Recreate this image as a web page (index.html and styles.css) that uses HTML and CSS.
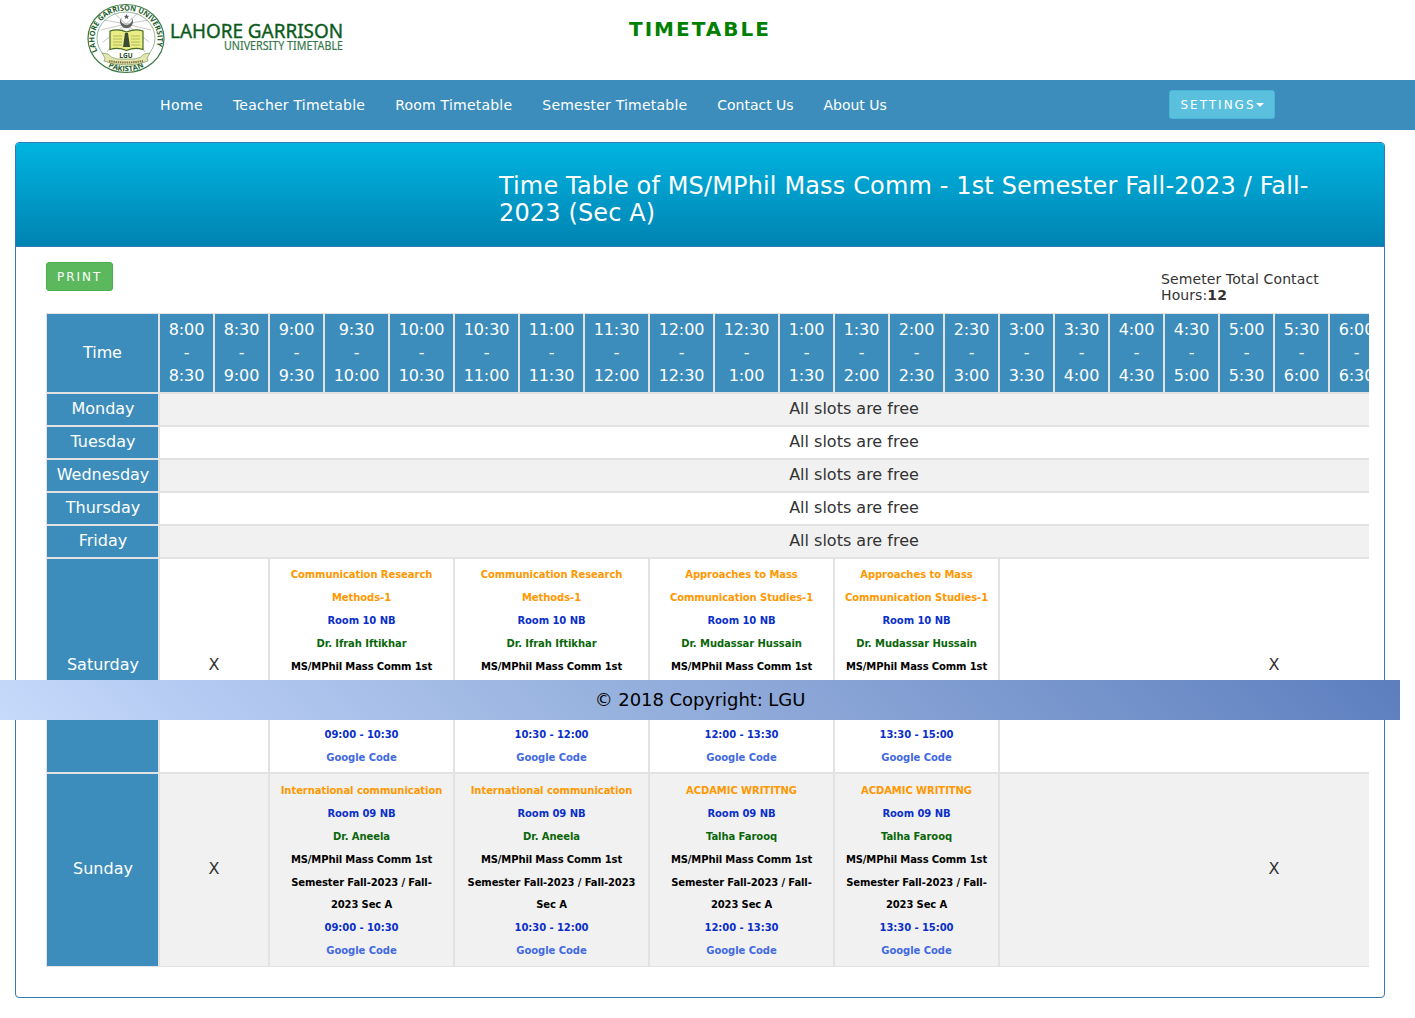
FILE: index.html
```html
<!DOCTYPE html>
<html lang="en">
<head>
<meta charset="utf-8">
<title>LGU Timetable</title>
<link rel="stylesheet" href="styles.css">
</head>
<body>
<header class="masthead">
  <svg class="logo" width="264" height="76" viewBox="0 0 264 76" role="img" aria-label="Lahore Garrison University Timetable">
    <defs>
      <path id="ring-top" d="M11 52 A31.5 28.5 0 1 1 67 52"/>
      <path id="ring-bottom" d="M17 64 A35 33 0 0 0 61 64"/>
    </defs>
    <ellipse cx="39" cy="38.500" rx="38" ry="34" fill="#fff" stroke="#3c7a45" stroke-width="1.200"/>
    <g stroke="#bfc2bf" stroke-width=".9">
      <path d="M39 24 14 30M39 24 17 20M39 24 27 13M39 24 51 13M39 24 61 20M39 24 64 30M39 24 16 42M39 24 62 42M39 24 20 52M39 24 58 52"/>
    </g>
    <ellipse cx="39" cy="38" rx="29" ry="26" fill="none" stroke="#7da481" stroke-width=".8"/>
    <g class="seal-text">
      <text><textPath href="#ring-top" startOffset="1" textLength="114" lengthAdjust="spacingAndGlyphs">LAHORE GARRISON UNIVERSITY</textPath></text>
      <text><textPath href="#ring-bottom" startOffset="5" textLength="37" lengthAdjust="spacingAndGlyphs">PAKISTAN</textPath></text>
    </g>
    <path d="M35 17a6.500 6.500 0 1 0 9 0 5.300 5.300 0 1 1-9 0z" fill="#5c605e"/>
    <path d="m39.500 14 .8 1.700 1.900.2-1.400 1.200.4 1.900-1.700-1-1.700 1 .4-1.900-1.400-1.200 1.900-.2z" fill="#5c605e"/>
    <path d="M23 31q8-2.500 16.500 1 8.500-3.500 16.500-1v18.500q-8-2.500-16.500 1-8.500-3.500-16.500-1z" fill="#eaec86" stroke="#476a25" stroke-width="1.200"/>
    <path d="M26 36h9M26 39h9M26 42h9M26 45h9M44 36h9M44 39h9M44 42h9M44 45h9" stroke="#a5ae51" stroke-width=".8"/>
    <path d="M38 33h3l2 14h-7z" fill="#3d4c38"/>
    <path d="M15 53l6 1q3 4 9 5h18q6-1 9-5l6-1-3 5 1 3q-9 4-22 4t-22-4l1-3z" fill="#e2e6b0" stroke="#7f9654" stroke-width=".7"/>
    <path d="M29 52h20v6H29z" fill="#fff"/>
    <text class="seal-lgu" x="39" y="57.500">LGU</text>
    <path d="M22 61q17 3 34 0" fill="none" stroke="#8a744a" stroke-width="2" stroke-dasharray="1.500 .7"/>
    <text class="brand-main" x="83" y="38" textLength="173" lengthAdjust="spacingAndGlyphs">LAHORE GARRISON</text>
    <text class="brand-sub" x="137" y="50" textLength="119" lengthAdjust="spacingAndGlyphs">UNIVERSITY TIMETABLE</text>
  </svg>
  <h1 class="site-title">TIMETABLE</h1>
</header>

<nav class="navbar">
  <ul class="nav-links">
    <li>Home</li><li>Teacher Timetable</li><li>Room Timetable</li><li>Semester Timetable</li><li>Contact Us</li><li>About Us</li>
  </ul>
  <button class="btn btn-settings">SETTINGS<span class="caret"></span></button>
</nav>

<main class="panel">
  <div class="panel-heading">
    <h3>Time Table of MS/MPhil Mass Comm - 1st Semester Fall-2023 / Fall-2023 (Sec A)</h3>
  </div>
  <div class="panel-body">
    <div class="toolbar">
      <button class="btn btn-print">PRINT</button>
      <h5 class="hours">Semeter Total Contact Hours:<b>12</b></h5>
    </div>
    <div class="table-scroll">
      <table class="timetable">
        <colgroup>
          <col class="col-day"><col span="3" class="col-slot"><col span="7" class="col-wide"><col span="14" class="col-slot">
        </colgroup>
        <tr class="slots">
          <th>Time</th>
          <th>8:00<br>-<br>8:30</th><th>8:30<br>-<br>9:00</th><th>9:00<br>-<br>9:30</th><th>9:30<br>-<br>10:00</th>
          <th>10:00<br>-<br>10:30</th><th>10:30<br>-<br>11:00</th><th>11:00<br>-<br>11:30</th><th>11:30<br>-<br>12:00</th>
          <th>12:00<br>-<br>12:30</th><th>12:30<br>-<br>1:00</th><th>1:00<br>-<br>1:30</th><th>1:30<br>-<br>2:00</th>
          <th>2:00<br>-<br>2:30</th><th>2:30<br>-<br>3:00</th><th>3:00<br>-<br>3:30</th><th>3:30<br>-<br>4:00</th>
          <th>4:00<br>-<br>4:30</th><th>4:30<br>-<br>5:00</th><th>5:00<br>-<br>5:30</th><th>5:30<br>-<br>6:00</th>
          <th>6:00<br>-<br>6:30</th><th>6:30<br>-<br>7:00</th><th>7:00<br>-<br>7:30</th><th>7:30<br>-<br>8:00</th>
        </tr>
        <tr class="free odd"><th>Monday</th><td colspan="24">All slots are free</td></tr>
        <tr class="free"><th>Tuesday</th><td colspan="24">All slots are free</td></tr>
        <tr class="free odd"><th>Wednesday</th><td colspan="24">All slots are free</td></tr>
        <tr class="free"><th>Thursday</th><td colspan="24">All slots are free</td></tr>
        <tr class="free odd"><th>Friday</th><td colspan="24">All slots are free</td></tr>
        <tr class="saturday">
          <th>Saturday</th>
          <td class="empty" colspan="2">X</td>
          <td colspan="3"><div class="lesson"><span class="course">Communication Research Methods-1</span><br><span class="room">Room 10 NB</span><br><span class="teacher">Dr. Ifrah Iftikhar</span><br><span class="group">MS/MPhil Mass Comm 1st Semester Fall-2023 / Fall-2023 Sec A</span><br><span class="room">09:00 - 10:30</span><br><span class="code">Google Code</span></div></td>
          <td colspan="3"><div class="lesson"><span class="course">Communication Research<br>Methods-1</span><br><span class="room">Room 10 NB</span><br><span class="teacher">Dr. Ifrah Iftikhar</span><br><span class="group">MS/MPhil Mass Comm 1st Semester Fall-2023 / Fall-2023 Sec A</span><br><span class="room">10:30 - 12:00</span><br><span class="code">Google Code</span></div></td>
          <td colspan="3"><div class="lesson"><span class="course">Approaches to Mass Communication Studies-1</span><br><span class="room">Room 10 NB</span><br><span class="teacher">Dr. Mudassar Hussain</span><br><span class="group">MS/MPhil Mass Comm 1st Semester Fall-2023 / Fall-2023 Sec A</span><br><span class="room">12:00 - 13:30</span><br><span class="code">Google Code</span></div></td>
          <td colspan="3"><div class="lesson"><span class="course">Approaches to Mass Communication Studies-1</span><br><span class="room">Room 10 NB</span><br><span class="teacher">Dr. Mudassar Hussain</span><br><span class="group">MS/MPhil Mass Comm 1st Semester Fall-2023 / Fall-2023 Sec A</span><br><span class="room">13:30 - 15:00</span><br><span class="code">Google Code</span></div></td>
          <td class="empty" colspan="10">X</td>
        </tr>
        <tr class="sunday odd">
          <th>Sunday</th>
          <td class="empty" colspan="2">X</td>
          <td colspan="3"><div class="lesson"><span class="course">International communication</span><br><span class="room">Room 09 NB</span><br><span class="teacher">Dr. Aneela</span><br><span class="group">MS/MPhil Mass Comm 1st Semester Fall-2023 / Fall-2023 Sec A</span><br><span class="room">09:00 - 10:30</span><br><span class="code">Google Code</span></div></td>
          <td colspan="3"><div class="lesson"><span class="course">International communication</span><br><span class="room">Room 09 NB</span><br><span class="teacher">Dr. Aneela</span><br><span class="group">MS/MPhil Mass Comm 1st Semester Fall-2023 / Fall-2023 Sec A</span><br><span class="room">10:30 - 12:00</span><br><span class="code">Google Code</span></div></td>
          <td colspan="3"><div class="lesson"><span class="course">ACDAMIC WRITITNG</span><br><span class="room">Room 09 NB</span><br><span class="teacher">Talha Farooq</span><br><span class="group">MS/MPhil Mass Comm 1st Semester Fall-2023 / Fall-2023 Sec A</span><br><span class="room">12:00 - 13:30</span><br><span class="code">Google Code</span></div></td>
          <td colspan="3"><div class="lesson"><span class="course">ACDAMIC WRITITNG</span><br><span class="room">Room 09 NB</span><br><span class="teacher">Talha Farooq</span><br><span class="group">MS/MPhil Mass Comm 1st Semester Fall-2023 / Fall-2023 Sec A</span><br><span class="room">13:30 - 15:00</span><br><span class="code">Google Code</span></div></td>
          <td class="empty" colspan="10">X</td>
        </tr>
      </table>
    </div>
  </div>
</main>

<footer class="copyright">© 2018 Copyright: LGU</footer>
</body>
</html>
```

FILE: styles.css
```css
* { box-sizing: border-box; }

html { overflow: hidden; }

body {
  margin: 0;
  font-family: "DejaVu Sans", Verdana, sans-serif;
  font-size: 14px;
  line-height: 1.42857;
  color: #333;
  background: #fff;
}

.masthead {
  display: flex;
  align-items: flex-start;
  height: 80px;
  padding-left: 87px;
}

.logo { flex: none; }

.seal-text {
  font: bold 7.5px "Open Sans", sans-serif;
  fill: #1d5c28;
}

.seal-lgu {
  font: bold 6.5px "Open Sans", sans-serif;
  fill: #1d4a22;
  text-anchor: middle;
}

.brand-main {
  font: 19.5px "Noto Sans", sans-serif;
  fill: #0b5a1b;
  stroke: #0b5a1b;
  stroke-width: .4px;
}

.brand-sub {
  font: 12px "Noto Sans", sans-serif;
  fill: #37784a;
  stroke: #37784a;
  stroke-width: .2px;
}

.site-title {
  margin: 18px 0 0 278px;
  font-size: 20px;
  line-height: 22px;
  letter-spacing: 2px;
  color: green;
}

.navbar {
  display: flex;
  justify-content: space-between;
  align-items: flex-start;
  height: 50px;
  padding: 10px 140px 0 160px;
  background: #3c8dbc;
}

.nav-links {
  display: flex;
  gap: 30px;
  margin: 0;
  padding: 6px 0 0;
  list-style: none;
  letter-spacing: .22px;
  color: #fff;
}

.nav-links li:first-child { letter-spacing: .4px; }
.nav-links li:nth-child(n + 5) { letter-spacing: -.03px; }

.btn {
  height: 29px;
  padding: 0 10px;
  border: 1px solid;
  border-radius: 3px;
  font: 12px/18px "DejaVu Sans", sans-serif;
  letter-spacing: 2px;
  color: #fff;
}

.btn-settings {
  width: 106px;
  background: #5bc0de;
  border-color: #46b8da;
}

.btn-print {
  width: 67px;
  background: #5cb85c;
  border-color: #4cae4c;
}

.caret {
  display: inline-block;
  vertical-align: middle;
  border-top: 4px solid;
  border-left: 4px solid transparent;
  border-right: 4px solid transparent;
}

.panel {
  width: 1370px;
  height: 856px;
  margin: 12px 0 20px 15px;
  border: 1px solid #337ab7;
  border-radius: 4px;
  overflow: hidden;
}

.panel-heading {
  height: 104px;
  padding: 30px 45px 0 483px;
  border-bottom: 1px solid #337ab7;
  background: linear-gradient(#00b4e0, #0083b2);
  color: #fff;
}

.panel-heading h3 {
  margin: 0;
  font-size: 24px;
  font-weight: 400;
  line-height: 27px;
  letter-spacing: .14px;
}

.panel-body { padding: 15px 15px 0 30px; }

.toolbar {
  display: flex;
  justify-content: space-between;
  align-items: flex-start;
  height: 51px;
}

.hours {
  width: 208px;
  margin: 9px 0 0;
  padding-right: 20px;
  font-size: 14px;
  font-weight: 400;
  line-height: 16px;
  letter-spacing: .1px;
}

.table-scroll { overflow: hidden; }

.timetable {
  width: 1503px;
  table-layout: fixed;
  border-collapse: separate;
  border-spacing: 0;
  font-size: 16px;
  text-align: center;
}

.col-day { width: 113px; }
.col-slot { width: 55px; }
.col-wide { width: 65px; }

.timetable th,
.timetable td {
  padding: 0 8px;
  border: 1px solid #e2e2e2;
  vertical-align: middle;
}

.timetable th {
  padding-left: 9px;
  background: #3c8dbc;
  color: #fff;
  font-weight: 400;
}

.timetable .slots th {
  padding: 0 8px 2px;
  letter-spacing: -.1px;
}

.odd td { background: #f1f1f1; }

.slots { height: 80px; line-height: 23px; }
.free { height: 33px; }
.saturday { height: 215px; }
.sunday { height: 194px; }

.timetable .saturday th,
.timetable .saturday .empty { padding-bottom: 1px; }

.timetable .sunday th,
.timetable .sunday .empty { padding-bottom: 2px; }

.lesson {
  padding-top: 3px;
  font-size: 10px;
  font-weight: 700;
  line-height: 22.857px;
  letter-spacing: -.06px;
}

.course { color: #ff9800; }
.room { color: #0a2fc9; }
.teacher { color: #0a660a; }
.group { color: #000; letter-spacing: -.12px; }
.code { color: #4169e1; }

.copyright {
  position: fixed;
  left: 0;
  top: 680px;
  width: 1400px;
  height: 40px;
  font-size: 18px;
  line-height: 40px;
  letter-spacing: -.08px;
  text-align: center;
  color: #000;
  background: linear-gradient(45deg, #c6dafb, #b6cbf2 14%, #9ab4e0 41%, #8aa5d6 58%, #6a8ac6 88%, #5c7ebd);
}
```
